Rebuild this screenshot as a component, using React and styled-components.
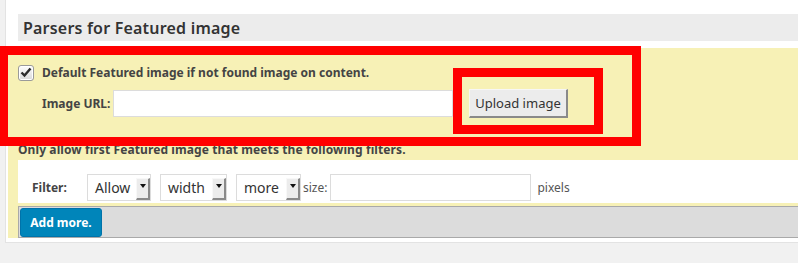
import React from "react";
import styled, { createGlobalStyle } from "styled-components";

const Global = createGlobalStyle`
  html, body { margin: 0; padding: 0; background: #f1f1f1; }
  body { font-family: "Noto Sans", "DejaVu Sans", sans-serif; color: #444; }
  * { box-sizing: border-box; }
`;

const Page = styled.div`
  position: relative;
  width: 798px;
  height: 263px;
  overflow: hidden;
`;

const Panel = styled.div`
  margin-left: 5px;
  background: #fff;
  border-left: 1px solid #e3e3e3;
  border-bottom: 1px solid #e3e3e3;
  padding: 14px 0 4px 0;
`;

const TitleBar = styled.div`
  margin-left: 12px;
  height: 27px;
  background: #ececec;
  display: flex;
  align-items: center;
  padding-left: 5px;
  font-size: 16px;
  font-weight: 600;
  letter-spacing: 0.2px;
  color: #333;
`;

const Section = styled.div`
  margin: 7px 0 0 2px;
  background: #f7f1b6;
  padding: 8px 0 0 10px;
  display: flex;
  flex-direction: column;
`;

const CheckRow = styled.label`
  height: 33px;
  display: flex;
  align-items: center;
  gap: 8px;
  font-size: 12px;
  font-weight: 700;
  color: #444;
`;

const CheckBox = styled.span`
  width: 16px;
  height: 16px;
  border-radius: 3px;
  border: 1px solid #9a9a9a;
  background: linear-gradient(#fdfdfd, #d9d9d9);
  box-shadow: inset 0 0 0 1px #fff;
  display: flex;
  align-items: center;
  justify-content: center;
`;

const UrlRow = styled.div`
  height: 29px;
  display: flex;
  align-items: center;
  padding-left: 24px;
`;

const Label = styled.span`
  font-size: 12px;
  font-weight: 700;
  color: #444;
  width: ${(p) => p.$w}px;
  flex: none;
`;

const TextInput = styled.div`
  width: ${(p) => p.$w}px;
  height: 27px;
  background: #fff;
  border: 1px solid #dcdcdc;
  flex: none;
`;

const UploadButton = styled.button`
  margin-left: 16px;
  width: 99px;
  height: 29px;
  background: #ececec;
  border: 1px solid #f6f6f6;
  border-right: 2px solid #8a8a8a;
  border-bottom: 2px solid #8a8a8a;
  font-family: "Noto Sans", sans-serif;
  font-size: 13px;
  color: #333;
  padding: 0;
`;

const Notice = styled.div`
  margin-top: 22px;
  height: 20px;
  line-height: 20px;
  font-size: 12px;
  font-weight: 700;
  letter-spacing: 0.1px;
  color: #444;
`;

const FilterRow = styled.div`
  height: 43px;
  background: #fff;
  display: flex;
  align-items: center;
  align-self: stretch;
  padding: 14px 0 2px 14px;
`;

const FakeSelect = styled.div`
  width: ${(p) => p.$w}px;
  height: 27px;
  margin-right: ${(p) => p.$mr}px;
  flex: none;
  background: #fff;
  border: 1px solid #dcdcdc;
  display: flex;
  align-items: center;
  justify-content: space-between;
  padding-left: 7px;
  font-size: 14px;
  color: #333;
`;

const Arrow = styled.span`
  width: 14px;
  height: 22px;
  margin-top: 2px;
  background: #ececec;
  border-top: 1px solid #f8f8f8;
  border-left: 1px solid #f8f8f8;
  border-right: 2px solid #8a8a8a;
  border-bottom: 2px solid #8a8a8a;
  display: flex;
  justify-content: center;
  padding-top: 5px;
`;

const SmallText = styled.span`
  font-size: 12px;
  color: #555;
  margin: 0 ${(p) => p.$mr || 0}px 0 ${(p) => p.$ml || 0}px;
`;

const Spacer = styled.div`
  height: 3px;
`;

const ButtonBar = styled.div`
  height: 32px;
  background: #dcdcdc;
  border-top: 1px solid #a9a9a9;
  border-bottom: 1px solid #a9a9a9;
  border-left: 1px solid #a9a9a9;
  padding: 1px 0 0 1px;
  display: flex;
  align-items: flex-start;
`;

const AddButton = styled.button`
  width: 82px;
  height: 29px;
  background: #0085ba;
  border: 1px solid #0073aa;
  border-radius: 3px;
  color: #fff;
  font-family: "Noto Sans", sans-serif;
  font-size: 12px;
  font-weight: 700;
  padding: 0;
`;

const RedBox = styled.div`
  position: absolute;
  left: ${(p) => p.$x}px;
  top: ${(p) => p.$y}px;
  width: ${(p) => p.$w}px;
  height: ${(p) => p.$h}px;
  border: 9px solid #ff0000;
  pointer-events: none;
`;

const Select = ({ w, mr, children }) => (
  <FakeSelect $w={w} $mr={mr}>
    <span>{children}</span>
    <Arrow>
      <svg width="6" height="4" viewBox="0 0 6 4">
        <path d="M0 0 H6 L3 4 Z" fill="#111" />
      </svg>
    </Arrow>
  </FakeSelect>
);

export default function App() {
  return (
    <Page>
      <Global />
      <Panel>
        <TitleBar>Parsers for Featured image</TitleBar>
        <Section>
          <CheckRow>
            <CheckBox>
              <svg width="12" height="11" viewBox="0 0 12 11">
                <path
                  d="M1.5 5.5 L4.5 8.5 L10.5 1.5"
                  fill="none"
                  stroke="#2b2b2b"
                  strokeWidth="2.4"
                />
              </svg>
            </CheckBox>
            Default Featured image if not found image on content.
          </CheckRow>
          <UrlRow>
            <Label $w={71}>Image URL:</Label>
            <TextInput $w={340} />
            <UploadButton>Upload image</UploadButton>
          </UrlRow>
          <Notice>Only allow first Featured image that meets the following filters.</Notice>
          <FilterRow>
            <Label $w={55}>Filter:</Label>
            <Select w={64} mr={9}>Allow</Select>
            <Select w={67} mr={9}>width</Select>
            <Select w={65} mr={0}>more</Select>
            <SmallText $ml={2} $mr={3}>size:</SmallText>
            <TextInput $w={201} />
            <SmallText $ml={6}>pixels</SmallText>
          </FilterRow>
          <Spacer />
          <ButtonBar>
            <AddButton>Add more.</AddButton>
          </ButtonBar>
        </Section>
      </Panel>
      <RedBox $x={-1} $y={46} $w={642} $h={100} />
      <RedBox $x={453} $y={68} $w={150} $h={66} />
    </Page>
  );
}
